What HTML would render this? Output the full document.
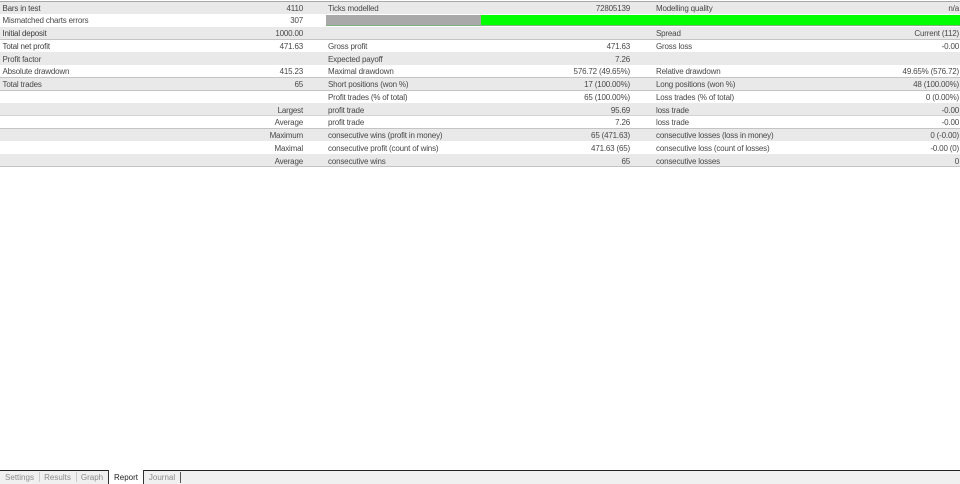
<!DOCTYPE html>
<html><head><meta charset="utf-8">
<style>
html,body{margin:0;padding:0;width:960px;height:484px;background:#fff;overflow:hidden}
body{position:relative;font-family:"Liberation Sans",sans-serif;font-size:8px;letter-spacing:-0.18px;color:#484848}
.r{position:absolute;left:0;width:960px;box-sizing:border-box}
.g{background:#e9e9e9}
.l{position:absolute;left:0;width:960px;height:1px;background:#c4c4c4}
.t{position:absolute;white-space:nowrap;line-height:14px;height:14px;filter:blur(0.3px)}
.a{text-align:right}
.tab{position:absolute;top:471px;height:13px;line-height:13px;text-align:center;color:#8a8a8a;font-size:8px;letter-spacing:0;filter:blur(0.3px)}
.s{position:absolute;width:1px}
</style></head><body>
<div class="l" style="top:1px;background:#a8a8a8"></div>
<div class="r g" style="top:2px;height:12px"></div>
<div class="r g" style="top:27px;height:12px"></div><div class="l" style="top:39px"></div>
<div class="r g" style="top:52px;height:13px"></div>
<div class="l" style="top:77px"></div>
<div class="r g" style="top:78px;height:12px"></div><div class="l" style="top:90px"></div>
<div class="r g" style="top:103px;height:12px"></div><div class="l" style="top:115px;background:#d4d4d4"></div>
<div class="l" style="top:128px"></div>
<div class="r g" style="top:129px;height:12px"></div>
<div class="r g" style="top:154px;height:12px"></div><div class="l" style="top:166px"></div>

<div style="position:absolute;left:326px;top:14px;width:634px;height:12px;background:#fff"></div>
<div style="position:absolute;left:326px;top:15px;width:155px;height:10px;background:#a9a9a9"></div>
<div style="position:absolute;left:481px;top:15px;width:479px;height:10px;background:#00ff00"></div>
<div style="position:absolute;left:326px;top:25px;width:634px;height:1px;background:#7fb07f"></div>

<div class="t" style="left:2.5px;top:2px;color:#3c3c3c">Bars in test</div>
<div class="t" style="left:2.5px;top:14px">Mismatched charts errors</div>
<div class="t" style="left:2.5px;top:27px;color:#3c3c3c">Initial deposit</div>
<div class="t" style="left:2.5px;top:40px;color:#3c3c3c">Total net profit</div>
<div class="t" style="left:2.5px;top:53px">Profit factor</div>
<div class="t" style="left:2.5px;top:65px">Absolute drawdown</div>
<div class="t" style="left:2.5px;top:78px">Total trades</div>

<div class="t a" style="right:657px;top:2px">4110</div>
<div class="t a" style="right:657px;top:14px">307</div>
<div class="t a" style="right:657px;top:27px">1000.00</div>
<div class="t a" style="right:657px;top:40px">471.63</div>
<div class="t a" style="right:657px;top:65px">415.23</div>
<div class="t a" style="right:657px;top:78px">65</div>
<div class="t a" style="right:657px;top:104px">Largest</div>
<div class="t a" style="right:657px;top:116px">Average</div>
<div class="t a" style="right:657px;top:129px">Maximum</div>
<div class="t a" style="right:657px;top:142px">Maximal</div>
<div class="t a" style="right:657px;top:155px">Average</div>

<div class="t" style="left:328px;top:2px">Ticks modelled</div>
<div class="t" style="left:328px;top:40px">Gross profit</div>
<div class="t" style="left:328px;top:53px">Expected payoff</div>
<div class="t" style="left:328px;top:65px">Maximal drawdown</div>
<div class="t" style="left:328px;top:78px">Short positions (won %)</div>
<div class="t" style="left:328px;top:91px">Profit trades (% of total)</div>
<div class="t" style="left:328px;top:104px">profit trade</div>
<div class="t" style="left:328px;top:116px">profit trade</div>
<div class="t" style="left:328px;top:129px">consecutive wins (profit in money)</div>
<div class="t" style="left:328px;top:142px">consecutive profit (count of wins)</div>
<div class="t" style="left:328px;top:155px">consecutive wins</div>

<div class="t a" style="right:330px;top:2px">72805139</div>
<div class="t a" style="right:330px;top:40px">471.63</div>
<div class="t a" style="right:330px;top:53px">7.26</div>
<div class="t a" style="right:330px;top:65px">576.72 (49.65%)</div>
<div class="t a" style="right:330px;top:78px">17 (100.00%)</div>
<div class="t a" style="right:330px;top:91px">65 (100.00%)</div>
<div class="t a" style="right:330px;top:104px">95.69</div>
<div class="t a" style="right:330px;top:116px">7.26</div>
<div class="t a" style="right:330px;top:129px">65 (471.63)</div>
<div class="t a" style="right:330px;top:142px">471.63 (65)</div>
<div class="t a" style="right:330px;top:155px">65</div>

<div class="t" style="left:656px;top:2px">Modelling quality</div>
<div class="t" style="left:656px;top:27px">Spread</div>
<div class="t" style="left:656px;top:40px">Gross loss</div>
<div class="t" style="left:656px;top:65px">Relative drawdown</div>
<div class="t" style="left:656px;top:78px">Long positions (won %)</div>
<div class="t" style="left:656px;top:91px">Loss trades (% of total)</div>
<div class="t" style="left:656px;top:104px">loss trade</div>
<div class="t" style="left:656px;top:116px">loss trade</div>
<div class="t" style="left:656px;top:129px">consecutive losses (loss in money)</div>
<div class="t" style="left:656px;top:142px">consecutive loss (count of losses)</div>
<div class="t" style="left:656px;top:155px">consecutive losses</div>

<div class="t a" style="right:1px;top:2px">n/a</div>
<div class="t a" style="right:1px;top:27px">Current (112)</div>
<div class="t a" style="right:1px;top:40px">-0.00</div>
<div class="t a" style="right:1px;top:65px">49.65% (576.72)</div>
<div class="t a" style="right:1px;top:78px">48 (100.00%)</div>
<div class="t a" style="right:1px;top:91px">0 (0.00%)</div>
<div class="t a" style="right:1px;top:104px">-0.00</div>
<div class="t a" style="right:1px;top:116px">-0.00</div>
<div class="t a" style="right:1px;top:129px">0 (-0.00)</div>
<div class="t a" style="right:1px;top:142px">-0.00 (0)</div>
<div class="t a" style="right:1px;top:155px">0</div>

<div style="position:absolute;left:0;top:470px;width:960px;height:14px;background:#f0f0f0"></div>
<div style="position:absolute;left:0;top:470px;width:960px;height:1px;background:#222"></div>
<div style="position:absolute;left:108px;top:470px;width:36px;height:14px;background:#fff;border-left:1px solid #333;border-right:1px solid #333;box-sizing:border-box"></div>
<div class="tab" style="left:0;width:39px">Settings</div>
<div class="tab" style="left:39px;width:37px">Results</div>
<div class="tab" style="left:76px;width:32px">Graph</div>
<div class="tab" style="left:108px;width:36px;color:#222">Report</div>
<div class="tab" style="left:144px;width:36px">Journal</div>
<div class="s" style="left:39px;top:472px;height:10px;background:#ccc"></div>
<div class="s" style="left:76px;top:472px;height:10px;background:#ccc"></div>
<div class="s" style="left:180px;top:472px;height:11px;background:#555"></div>
</body></html>
